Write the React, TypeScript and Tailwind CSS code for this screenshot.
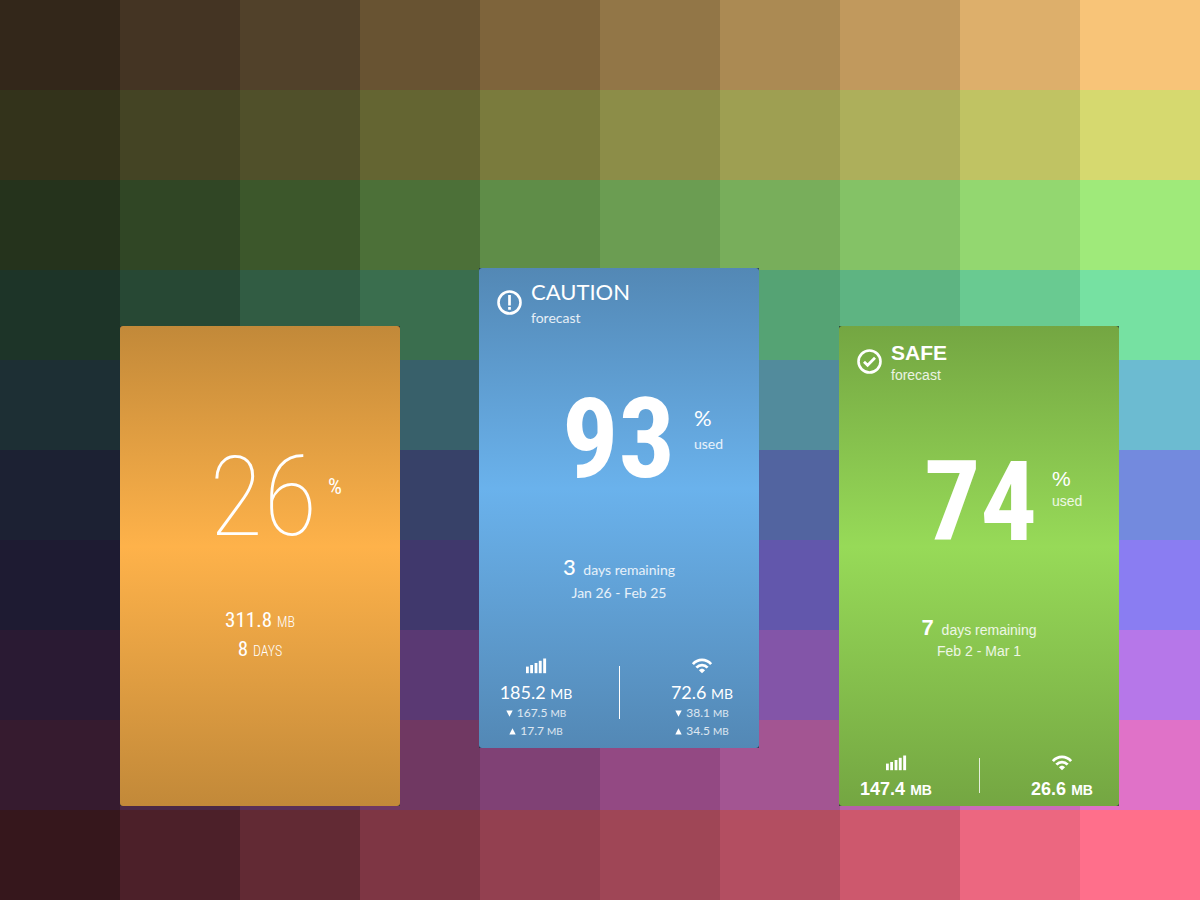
import clsx from "clsx";

const swatches = [
  ["bg-[#33271a]", "bg-[#443423]", "bg-[#51412a]", "bg-[#685332]", "bg-[#7e643b]", "bg-[#927647]", "bg-[#ab8a53]", "bg-[#c1995d]", "bg-[#ddaf6b]", "bg-[#f8c478]"],
  ["bg-[#33331b]", "bg-[#444424]", "bg-[#50502a]", "bg-[#646532]", "bg-[#7a7b3d]", "bg-[#8c8d48]", "bg-[#9e9f52]", "bg-[#adaf5b]", "bg-[#c0c363]", "bg-[#d6d96f]"],
  ["bg-[#25331c]", "bg-[#304625]", "bg-[#3c572b]", "bg-[#4c7038]", "bg-[#5f8d48]", "bg-[#6b9d52]", "bg-[#78ae5b]", "bg-[#84c266]", "bg-[#93d770]", "bg-[#9fea7a]"],
  ["bg-[#1d3428]", "bg-[#274834]", "bg-[#315c43]", "bg-[#3a6e4e]", "bg-[#448560]", "bg-[#4c946a]", "bg-[#55a374]", "bg-[#5eb482]", "bg-[#69ca91]", "bg-[#76e1a2]"],
  ["bg-[#1d2f34]", "bg-[#263f47]", "bg-[#2f5159]", "bg-[#38606a]", "bg-[#41707d]", "bg-[#497d8c]", "bg-[#528b9c]", "bg-[#5a9bad]", "bg-[#63aabe]", "bg-[#6cbbd1]"],
  ["bg-[#1c2133]", "bg-[#252c46]", "bg-[#2e3758]", "bg-[#374168]", "bg-[#404d7c]", "bg-[#49588e]", "bg-[#5264a0]", "bg-[#5d70b4]", "bg-[#687dc9]", "bg-[#738ade]"],
  ["bg-[#1e1b32]", "bg-[#292545]", "bg-[#352e59]", "bg-[#40386c]", "bg-[#4b4281]", "bg-[#574d97]", "bg-[#6257ac]", "bg-[#6f63c3]", "bg-[#7d70da]", "bg-[#8a7df2]"],
  ["bg-[#2a1a33]", "bg-[#3a2448]", "bg-[#4a2f5e]", "bg-[#5a3973]", "bg-[#684285]", "bg-[#754c96]", "bg-[#8355a8]", "bg-[#9460be]", "bg-[#a56cd4]", "bg-[#b677e9]"],
  ["bg-[#361b2f]", "bg-[#4b2844]", "bg-[#5b3056]", "bg-[#703862]", "bg-[#804175]", "bg-[#934983]", "bg-[#a35592]", "bg-[#b661a8]", "bg-[#cc6bba]", "bg-[#e072c8]"],
  ["bg-[#36171c]", "bg-[#4c2029]", "bg-[#622a34]", "bg-[#7e3644]", "bg-[#934050]", "bg-[#9f4656]", "bg-[#b34e61]", "bg-[#cd586d]", "bg-[#ec6780]", "bg-[#ff6f8b]"],
];

function SwatchWall() {
  return (
    <div className="col-start-1 row-start-1 grid grid-cols-10 grid-rows-10" aria-hidden="true">
      {swatches.flat().map((color, i) => (
        <div key={i} className={color} />
      ))}
    </div>
  );
}

function CautionIcon({ className }: { className?: string }) {
  return (
    <svg viewBox="0 0 25 25" className={clsx("w-[25px] h-[25px]", className)} fill="none" stroke="white">
      <circle cx="12.5" cy="12.5" r="11" strokeWidth="2.6" />
      <path d="M12.5 5v10.4M12.5 17.1v2.6" strokeWidth="2.7" />
    </svg>
  );
}

function SafeIcon({ className }: { className?: string }) {
  return (
    <svg viewBox="0 0 25 25" className={clsx("w-[25px] h-[25px]", className)} fill="none" stroke="white">
      <circle cx="12.5" cy="12.5" r="11" strokeWidth="2.6" />
      <path d="M7 12.8l3.6 3.4L18 8.8" strokeWidth="2.8" />
    </svg>
  );
}

function SignalIcon() {
  return (
    <svg viewBox="0 0 22 16" className="w-[22px] h-4" fill="white">
      <rect x="1" y="8.6" width="2.8" height="6.6" />
      <rect x="5.2" y="7" width="2.8" height="8.2" />
      <rect x="9.6" y="5" width="2.8" height="10.2" />
      <rect x="13.8" y="2.8" width="2.9" height="12.4" />
      <rect x="18.2" y="0.5" width="2.9" height="14.7" />
    </svg>
  );
}

function WifiIcon() {
  return (
    <svg viewBox="0 0 22 16" className="w-[22px] h-4" fill="none" stroke="white" strokeWidth="2.8">
      <path d="M1.9 6.1C7 0.5 15 0.5 20.1 6.1" />
      <path d="M5.4 9.6C8.6 6.2 13.4 6.2 16.6 9.6" />
      <path d="M11 15.2L7.9 12.3C9.4 10.2 12.6 10.2 14.1 12.3Z" fill="white" stroke="none" />
    </svg>
  );
}

function Triangle({ down }: { down?: boolean }) {
  return (
    <svg viewBox="0 0 7 7" className="w-[7px] h-[7px]" fill="white">
      <path d={down ? "M0.3 0.5H6.7L3.5 6.7Z" : "M0.3 6.5H6.7L3.5 0.3Z"} />
    </svg>
  );
}

type Usage = {
  icon: "signal" | "wifi";
  total: string;
  down?: string;
  up?: string;
};

function UsageColumn({ icon, total, down, up }: Usage) {
  return (
    <div className="w-[114px] flex flex-col items-center">
      {icon === "signal" ? <SignalIcon /> : <WifiIcon />}
      <p className="mt-1.5 text-[18px] leading-6">
        {total} <span className="text-sm">MB</span>
      </p>
      {down && (
        <p className="flex items-center gap-1 text-xs leading-[18px] font-normal text-white/80">
          <Triangle down />
          <span>
            {down} <span className="text-[10px]">MB</span>
          </span>
        </p>
      )}
      {up && (
        <p className="flex items-center gap-1 text-xs leading-[18px] font-normal text-white/80">
          <Triangle />
          <span>
            {up} <span className="text-[10px]">MB</span>
          </span>
        </p>
      )}
    </div>
  );
}

function Card({
  label,
  className,
  fill,
  children,
}: {
  label: string;
  className?: string;
  fill: string;
  children: React.ReactNode;
}) {
  return (
    <article aria-label={label} className={clsx("w-[280px] shrink-0 rounded-[1px] bg-[#1b2430]", className)}>
      <div className={clsx("flex flex-col min-h-[480px] rounded-[3px] text-white whitespace-nowrap", fill)}>
        {children}
      </div>
    </article>
  );
}

function OrangeCard() {
  return (
    <Card
      label="Current usage"
      className="mr-[79px]"
      fill="bg-[linear-gradient(#c28939,#feb24a_46%,#c28939)] font-['Roboto_Condensed',sans-serif]"
    >
      <div className="mt-[111px] pl-[89px] flex">
        <p className="w-[119px] text-[112px] leading-[120px] font-thin">26</p>
        <p className="mt-9 text-[22px] leading-7">%</p>
      </div>
      <div className="mt-[49px] text-center text-[21px] leading-[29px]">
        <p>
          311.8 <span className="text-sm font-light">MB</span>
        </p>
        <p>
          8 <span className="text-sm font-light">DAYS</span>
        </p>
      </div>
    </Card>
  );
}

function BlueCard() {
  return (
    <Card
      label="Caution forecast"
      className="mr-20 -mt-[58px]"
      fill="bg-[linear-gradient(#5388b5,#6ab2ec_46%,#5388b5)] font-['Lato',sans-serif]"
    >
      <header className="flex gap-[9px] pt-2.5 pl-[18px]">
        <CautionIcon className="mt-3" />
        <div>
          <h2 className="text-[22px] leading-7">CAUTION</h2>
          <p className="text-sm leading-6 text-white/85">forecast</p>
        </div>
      </header>

      <div className="mt-[49px] pl-[83px] flex">
        <p className="w-[132px] text-[112px] leading-[120px] font-bold font-['Roboto_Condensed',sans-serif]">
          93
        </p>
        <div className="mt-[25px]">
          <p className="text-[22px] leading-7">%</p>
          <p className="text-sm leading-6 text-white/85">used</p>
        </div>
      </div>

      <div className="mt-[54px] text-center text-sm">
        <p className="leading-7 text-white/85">
          <span className="mr-1 text-[22px] font-medium text-white">3</span> days remaining
        </p>
        <p className="leading-[18px] text-white/85">Jan 26 - Feb 25</p>
      </div>

      <div className="mt-auto pb-2 flex justify-between">
        <UsageColumn icon="signal" total="185.2" down="167.5" up="17.7" />
        <div className="mt-2 w-px h-[53px] bg-white" />
        <UsageColumn icon="wifi" total="72.6" down="38.1" up="34.5" />
      </div>
    </Card>
  );
}

function GreenCard() {
  return (
    <Card
      label="Safe forecast"
      fill="bg-[linear-gradient(#74a642,#97da58_46%,#74a642)] font-['Liberation_Sans',sans-serif]"
    >
      <header className="flex gap-[9px] pt-[15px] pl-[18px]">
        <SafeIcon className="mt-2" />
        <div>
          <h2 className="text-[21px] leading-6 font-bold">SAFE</h2>
          <p className="text-sm leading-5 text-white/85">forecast</p>
        </div>
      </header>

      <div className="mt-[57px] pl-[85px] flex">
        <p className="w-[128px] text-[112px] leading-[120px] font-bold font-['Roboto_Condensed',sans-serif]">
          74
        </p>
        <div className="mt-[25px]">
          <p className="text-[21px] leading-6">%</p>
          <p className="text-sm leading-5 text-white/85">used</p>
        </div>
      </div>

      <div className="mt-[52px] text-center text-sm">
        <p className="leading-7 text-white/85">
          <span className="mr-1 text-[22px] font-bold text-white">7</span> days remaining
        </p>
        <p className="leading-[14px] text-white/85">Feb 2 - Mar 1</p>
      </div>

      <div className="mt-auto pb-[5px] flex justify-between font-bold">
        <UsageColumn icon="signal" total="147.4" />
        <div className="mt-[3px] w-px h-[35px] bg-white/80" />
        <UsageColumn icon="wifi" total="26.6" />
      </div>
    </Card>
  );
}

export default function App() {
  return (
    <main className="grid min-h-screen">
      <SwatchWall />
      <div className="col-start-1 row-start-1 flex items-start pt-[326px] pl-[10%]">
        <OrangeCard />
        <BlueCard />
        <GreenCard />
      </div>
    </main>
  );
}
